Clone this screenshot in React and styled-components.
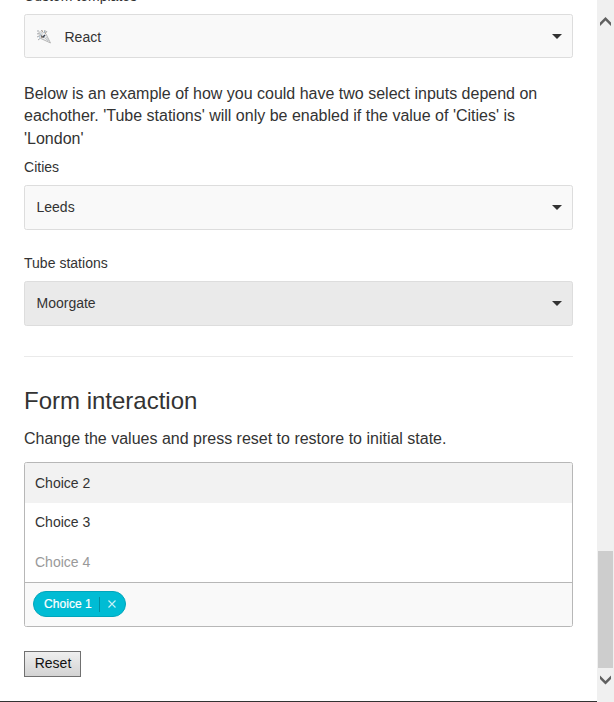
import React from "react";
import styled, { createGlobalStyle } from "styled-components";

const GlobalStyle = createGlobalStyle`
  * { box-sizing: border-box; }
  body {
    margin: 0;
    overflow: hidden;
    background: #fff;
    color: #333;
    font-family: "Liberation Sans", Arial, sans-serif;
  }
`;

const Window = styled.div`
  display: flex;
  width: 614px;
  height: 702px;
  overflow: hidden;
`;

const Page = styled.main`
  display: flex;
  flex-direction: column;
  align-items: stretch;
  width: 597px;
  height: 702px;
  padding: 0 24px;
  border-bottom: 1px solid #333;
  overflow: hidden;
`;

const Label = styled.label`
  flex: none;
  height: 20px;
  margin-top: ${(p) => p.$top}px;
  margin-bottom: 8px;
  font-size: 14px;
  line-height: 20px;
  letter-spacing: 0.02px;
  white-space: nowrap;
`;

const SelectBox = styled.div`
  display: flex;
  flex: none;
  align-items: center;
  width: 549px;
  height: ${(p) => p.$height || 45}px;
  padding: 0 10px 0 11.5px;
  border: 1px solid #ddd;
  border-radius: 2.5px;
  background: ${(p) => (p.$disabled ? "#eaeaea" : "#f9f9f9")};
  font-size: 14px;
  line-height: 20px;
`;

const SelectValue = styled.span`
  flex: 1;
  padding-top: ${(p) => (p.$hasIcon ? 2 : 0)}px;
  padding-bottom: ${(p) => (p.$hasIcon ? 0 : 1)}px;
`;

const Arrow = styled.span`
  width: 0;
  height: 0;
  border: 5px solid transparent;
  border-top-color: #333;
  border-bottom: 0;
`;

const PopperIcon = styled.svg`
  width: 15px;
  height: 15px;
  margin-left: -1px;
  margin-right: 14px;
`;

const Copy = styled.p`
  flex: none;
  margin: ${(p) => p.$top}px 0 0;
  font-size: 16px;
  line-height: 22.4px;
  white-space: nowrap;
`;

const Divider = styled.hr`
  flex: none;
  width: 549px;
  height: 1px;
  margin: 30px 0 0;
  border: 0;
  background: #eaeaea;
`;

const Heading = styled.h2`
  flex: none;
  margin: 30px 0 0;
  font-size: 24px;
  font-weight: 400;
  line-height: 28px;
`;

const MultiSelect = styled.div`
  flex: none;
  width: 549px;
  height: 165px;
  margin-top: 12px;
  border: 1px solid #b7b7b7;
  border-radius: 2.5px;
  overflow: hidden;
`;

const Option = styled.div`
  height: ${(p) => p.$height}px;
  padding: 0 10px;
  font-size: 14px;
  line-height: ${(p) => (p.$height === 39 ? 38 : 40)}px;
  color: ${(p) => (p.$disabled ? "#999" : "#333")};
  background: ${(p) => (p.$active ? "#f2f2f2" : "#fff")};
`;

const Selected = styled.div`
  height: 44px;
  padding: 8px;
  border-top: 1px solid #b7b7b7;
  background: #f9f9f9;
`;

const Chip = styled.div`
  display: flex;
  align-items: center;
  width: 93px;
  height: 26px;
  padding-left: 10px;
  border: 1px solid #00a5bb;
  border-radius: 13px;
  background: #00bcd4;
  color: #fff;
  font-size: 12px;
  line-height: 16px;
  white-space: nowrap;
`;

const ChipText = styled.span`
  width: 55px;
  letter-spacing: 0.05px;
  -webkit-text-stroke: 0.2px #fff;
`;

const Remove = styled.button`
  display: flex;
  align-items: center;
  height: 15px;
  padding: 0 0 0 8px;
  border: 0;
  border-left: 1px solid #008fa1;
  background: none;
`;

const ResetButton = styled.button`
  flex: none;
  align-self: flex-start;
  width: 57px;
  height: 26px;
  margin-top: 24px;
  padding: 0 0 2px;
  border: 1px solid #707070;
  background: linear-gradient(#efefef, #d3d3d3);
  color: #111;
  font: 14px/22px "Liberation Sans", Arial, sans-serif;
  text-indent: 1px;
`;

const Scrollbar = styled.aside`
  display: flex;
  flex-direction: column;
  align-items: center;
  width: 17px;
  height: 702px;
  padding-top: 16px;
  background: #f0f0f0;
`;

const Thumb = styled.div`
  width: 15px;
  height: 117px;
  margin: 525px 0 7px;
  background: #cdcdcd;
`;

const Chevron = styled.svg`
  flex: none;
  width: 11px;
  height: 10px;
`;

function Popper() {
  return (
    <PopperIcon viewBox="0 0 15 15" fill="none">
      <path d="M4 10 10 5l4.5 9Z" fill="#eee" />
      <path d="m10 5 4.5 9L5 9.5" stroke="#aaa" strokeWidth=".8" />
      <path d="m8 8 4 4M10 8l3 4" stroke="#c5c9cc" />
      <path d="M1 2h2m2-1 2 2m2-2-1 3m3-2-2 3M1 5l3-1M1 8l4-2M2 11l4-3" stroke="#a5a8ac" />
      <path d="M3 3h3v3H3ZM7 4l3-2" stroke="#c5c5c5" />
      <path d="m5 7 2 1 2-2" stroke="#374252" strokeWidth="1.5" />
      <path d="M4 5h1M8 3h1M3 8h1" stroke="#8eafc5" />
      <path d="M5 8h2M9 4h1M6 2h1" stroke="#b59a81" />
    </PopperIcon>
  );
}

function Select({ children, icon, ...props }) {
  return (
    <SelectBox {...props}>
      {icon}
      <SelectValue $hasIcon={Boolean(icon)}>{children}</SelectValue>
      <Arrow />
    </SelectBox>
  );
}

export default function App() {
  return (
    <Window>
      <GlobalStyle />
      <Page>
        <Label $top={-14}>Custom templates</Label>
        <Select $height={44} icon={<Popper />}>React</Select>
        <Copy $top={25}>
          Below is an example of how you could have two select inputs depend on<br />
          eachother. 'Tube stations' will only be enabled if the value of 'Cities' is<br />
          'London'
        </Copy>
        <Label $top={6.8}>Cities</Label>
        <Select>Leeds</Select>
        <Label $top={23}>Tube stations</Label>
        <Select $disabled>Moorgate</Select>
        <Divider />
        <Heading>Form interaction</Heading>
        <Copy $top={12.6}>Change the values and press reset to restore to initial state.</Copy>
        <MultiSelect>
          <Option $height={40} $active>Choice 2</Option>
          <Option $height={39}>Choice 3</Option>
          <Option $height={40} $disabled>Choice 4</Option>
          <Selected>
            <Chip>
              <ChipText>Choice 1</ChipText>
              <Remove aria-label="Remove Choice 1">
                <svg width="8" height="8" viewBox="0 0 8 8">
                  <path d="m.5.5 7 7m0-7-7 7" stroke="#c5f0f5" strokeWidth="1.2" />
                </svg>
              </Remove>
            </Chip>
          </Selected>
        </MultiSelect>
        <ResetButton>Reset</ResetButton>
      </Page>
      <Scrollbar>
        <Chevron viewBox="0 0 11 10"><path d="M0 6.5 5.5 1 11 6.5V10L5.5 4.5 0 10Z" fill="#606060" /></Chevron>
        <Thumb />
        <Chevron viewBox="0 0 11 10"><path d="M0 .5 5.5 6 11 .5V4L5.5 9.5 0 4Z" fill="#606060" /></Chevron>
      </Scrollbar>
    </Window>
  );
}
